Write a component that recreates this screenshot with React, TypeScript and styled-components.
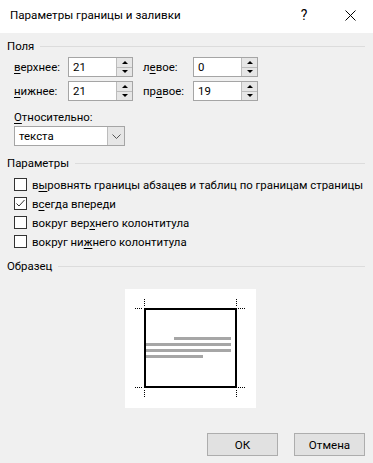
import React from 'react';
import styled, { createGlobalStyle } from 'styled-components';

const GlobalStyle = createGlobalStyle`
  html, body {
    margin: 0;
    padding: 0;
    background: #f0f0f0;
  }
  body {
    font-family: 'Segoe UI', Roboto, 'Liberation Sans', sans-serif;
    font-size: 11.4px;
    color: #000;
  }
`;

const Dialog = styled.div`
  width: 373px;
  height: 463px;
  display: flex;
  flex-direction: column;
  background: #f0f0f0;
  overflow: hidden;
`;

const TitleBar = styled.div`
  height: 33px;
  flex: none;
  display: flex;
  align-items: center;
  background: #fff;
  padding-left: 10px;
`;

const Title = styled.div`
  flex: 1;
  font-size: 11.6px;
  padding-bottom: 3px;
`;

const TitleButton = styled.div`
  width: 46px;
  height: 33px;
  display: flex;
  align-items: center;
  justify-content: center;
  font-size: 14px;
  padding-bottom: 3px;
  box-sizing: border-box;
`;

const Body = styled.div`
  flex: 1;
  display: flex;
  flex-direction: column;
  padding: 5px 8px 7px 7px;
`;

const Heading = styled.div`
  height: 16px;
  display: flex;
  align-items: center;
  gap: 6px;

  &::after {
    content: '';
    flex: 1;
    border-top: 1px solid #dcdcdc;
    margin-top: 1px;
  }
`;

const FieldGrid = styled.div`
  display: grid;
  grid-template-columns: 54px 65px 10px 50px 65px;
  grid-auto-rows: 20px;
  row-gap: 4px;
  align-items: center;
  margin: 3px 0 0 7px;
`;

const Label = styled.span<{ $col?: number }>`
  grid-column: ${(p) => p.$col ?? 'auto'};
  white-space: nowrap;
`;

const Key = styled.span`
  text-decoration: underline;
  text-underline-offset: 2px;
`;

const SpinBox = styled.div<{ $col: number }>`
  grid-column: ${(p) => p.$col};
  height: 20px;
  box-sizing: border-box;
  border: 1px solid #a5a5a5;
  background: #fff;
  display: flex;
`;

const SpinValue = styled.div`
  flex: 1;
  padding-left: 4px;
  line-height: 18px;
`;

const SpinButtons = styled.div`
  width: 15px;
  display: flex;
  flex-direction: column;
  border-left: 1px solid #bcbcbc;
  background: #e6e6e6;
`;

const SpinHalf = styled.div<{ $down?: boolean }>`
  flex: 1;
  display: flex;
  align-items: center;
  justify-content: center;
  border-top: ${(p) => (p.$down ? '1px solid #bcbcbc' : 'none')};

  &::before {
    content: '';
    width: 0;
    height: 0;
    border-left: 3px solid transparent;
    border-right: 3px solid transparent;
    ${(p) => (p.$down ? 'border-top: 3px solid #000;' : 'border-bottom: 3px solid #000;')}
  }
`;

const RelativeBlock = styled.div`
  display: flex;
  flex-direction: column;
  gap: 2px;
  margin: 9px 0 0 7px;
`;

const Select = styled.div`
  width: 111px;
  height: 20px;
  box-sizing: border-box;
  border: 1px solid #a5a5a5;
  background: #fff;
  display: flex;
`;

const SelectValue = styled.div`
  flex: 1;
  padding-left: 4px;
  line-height: 18px;
`;

const SelectButton = styled.div`
  width: 16px;
  border-left: 1px solid #bcbcbc;
  background: #e6e6e6;
  display: flex;
  align-items: center;
  justify-content: center;
`;

const Section = styled.div<{ $top: number }>`
  margin-top: ${(p) => p.$top}px;
`;

const CheckList = styled.div`
  display: flex;
  flex-direction: column;
  margin: 4px 0 0 7px;
`;

const CheckRow = styled.label`
  height: 19px;
  display: flex;
  align-items: center;
  gap: 5px;
  white-space: nowrap;
`;

const Box = styled.span`
  width: 13px;
  height: 13px;
  box-sizing: border-box;
  border: 1px solid #333;
  background: #fff;
  display: flex;
  align-items: center;
  justify-content: center;
  flex: none;
`;

const PreviewWrap = styled.div`
  display: flex;
  padding: 15px 0 0 118px;
`;

const Footer = styled.div`
  margin-top: auto;
  display: flex;
  justify-content: flex-end;
  gap: 16px;
`;

const Button = styled.button`
  width: 71px;
  height: 23px;
  border: 1px solid #adadad;
  background: #e1e1e1;
  font-family: inherit;
  font-size: 11.6px;
  color: #000;
  padding: 0;
`;

const Spin: React.FC<{ value: string; col: number }> = ({ value, col }) => (
  <SpinBox $col={col}>
    <SpinValue>{value}</SpinValue>
    <SpinButtons>
      <SpinHalf />
      <SpinHalf $down />
    </SpinButtons>
  </SpinBox>
);

const Check: React.FC<{ checked?: boolean; children: React.ReactNode }> = ({ checked, children }) => (
  <CheckRow>
    <Box>
      {checked && (
        <svg width="11" height="11" viewBox="0 0 11 11">
          <path d="M1.5 5.5 L4 8 L9.5 2" fill="none" stroke="#333" strokeWidth="1" />
        </svg>
      )}
    </Box>
    <span>{children}</span>
  </CheckRow>
);

const Sample = () => (
  <svg width="131" height="119" viewBox="0 0 131 119">
    <rect x="0" y="0" width="131" height="119" fill="#fff" />
    <g stroke="#000" strokeWidth="1" strokeDasharray="1 1" fill="none">
      <path d="M10 19.5 H18" />
      <path d="M19.5 10 V18" />
      <path d="M113 19.5 H121" />
      <path d="M111.5 10 V18" />
      <path d="M10 98.5 H18" />
      <path d="M19.5 101 V109" />
      <path d="M113 98.5 H121" />
      <path d="M111.5 101 V109" />
    </g>
    <rect x="20" y="20" width="91" height="78" fill="none" stroke="#000" strokeWidth="2" />
    <g fill="#a6a6a6">
      <rect x="49" y="48" width="57" height="3" />
      <rect x="21" y="54" width="85" height="3" />
      <rect x="21" y="60" width="85" height="3" />
      <rect x="21" y="66" width="57" height="3" />
    </g>
  </svg>
);

const App: React.FC = () => (
  <>
    <GlobalStyle />
    <Dialog>
      <TitleBar>
        <Title>Параметры границы и заливки</Title>
        <TitleButton>?</TitleButton>
        <TitleButton>
          <svg width="11" height="11" viewBox="0 0 11 11">
            <path d="M0.5 0.5 L10.5 10.5 M10.5 0.5 L0.5 10.5" stroke="#000" strokeWidth="1" />
          </svg>
        </TitleButton>
      </TitleBar>
      <Body>
        <Heading>Поля</Heading>
        <FieldGrid>
          <Label>
            <Key>в</Key>ерхнее:
          </Label>
          <Spin value="21" col={2} />
          <Label $col={4}>
            л<Key>е</Key>вое:
          </Label>
          <Spin value="0" col={5} />
          <Label>
            <Key>н</Key>ижнее:
          </Label>
          <Spin value="21" col={2} />
          <Label $col={4}>
            пр<Key>а</Key>вое:
          </Label>
          <Spin value="19" col={5} />
        </FieldGrid>
        <RelativeBlock>
          <span>
            <Key>О</Key>тносительно:
          </span>
          <Select>
            <SelectValue>текста</SelectValue>
            <SelectButton>
              <svg width="9" height="5" viewBox="0 0 9 5">
                <path d="M0.5 0.5 L4.5 4.5 L8.5 0.5" fill="none" stroke="#555" strokeWidth="1" />
              </svg>
            </SelectButton>
          </Select>
        </RelativeBlock>
        <Section $top={9}>
          <Heading>Параметры</Heading>
          <CheckList>
            <Check>
              в<Key>ы</Key>ровнять границы абзацев и таблиц по границам страницы
            </Check>
            <Check checked>
              в<Key>с</Key>егда впереди
            </Check>
            <Check>
              вокруг вер<Key>х</Key>него колонтитула
            </Check>
            <Check>
              вокруг ни<Key>ж</Key>него колонтитула
            </Check>
          </CheckList>
        </Section>
        <Section $top={7}>
          <Heading>Образец</Heading>
          <PreviewWrap>
            <Sample />
          </PreviewWrap>
        </Section>
        <Footer>
          <Button>ОК</Button>
          <Button>Отмена</Button>
        </Footer>
      </Body>
    </Dialog>
  </>
);

export default App;
